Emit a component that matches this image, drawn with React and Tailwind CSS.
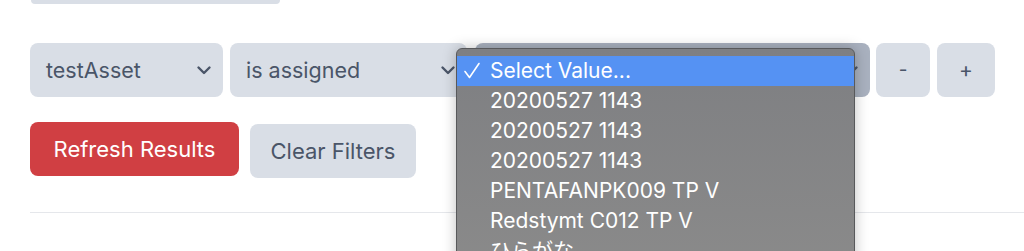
import React from 'react';

const font = { fontFamily: 'Inter, "Noto Sans", "Noto Sans CJK JP", sans-serif' };

function Chevron() {
    return (
        <svg width="16" height="16" viewBox="0 0 16 16" fill="none" stroke="#4a5568" strokeWidth="2.4" strokeLinecap="round" strokeLinejoin="round">
            <path d="M2.5 5.5l5.5 5.5 5.5-5.5" />
        </svg>
    );
}

function SelectBox({ label, width, dark }) {
    return (
        <div className={`h-[54px] ${width} ${dark ? 'bg-[#a9b1bf]' : 'bg-[#d9dee6]'} rounded-lg flex items-center justify-between pl-4 pr-[11px] text-[21.5px] text-[#4a5568]`}>
            <span>{label}</span>
            <Chevron />
        </div>
    );
}

export default function App() {
    const options = ['20200527 1143', '20200527 1143', '20200527 1143', 'PENTAFANPK009 TP V', 'Redstymt C012 TP V', 'ひらがな'];

    return (
        <div className="relative w-[1024px] h-[251px] overflow-hidden bg-white" style={font}>
            <div className="ml-[31px] w-[249px] h-[4px] bg-[#d9dee6] rounded-b-lg" />

            <div className="pl-[30px] mt-[39px] flex items-center">
                <SelectBox label="testAsset" width="w-[193px]" />
                <div className="ml-[7px]"><SelectBox label="is assigned" width="w-[237px]" /></div>
                <div className="ml-[8px]"><SelectBox label="" width="w-[395px]" dark /></div>
                <button className="ml-[6px] w-[54px] h-[54px] rounded-lg bg-[#d9dee6] text-[#4a5568] text-[19px]">-</button>
                <button className="ml-[7px] w-[58px] h-[54px] rounded-lg bg-[#d9dee6] text-[#4a5568] text-[21px]">+</button>
            </div>

            <div className="pl-[30px] mt-[25px] flex items-start">
                <button className="w-[209px] h-[54px] rounded-lg bg-[#d03f43] text-white text-[22px]">Refresh Results</button>
                <button className="ml-[11px] mt-[2px] w-[166px] h-[54px] rounded-lg bg-[#d9dee6] text-[#4a5568] text-[22px]">Clear Filters</button>
            </div>

            <div className="ml-[30px] mt-[34px] h-px bg-[#e5e7eb]" />

            {/* native select popup */}
            <div className="absolute left-[456px] top-[48px] w-[399px] h-[220px] rounded-t-[6px] border border-[#58595b] bg-gradient-to-b from-[#7e7f82] to-[#8a8a8a] shadow-[0_0_14px_rgba(0,0,0,0.25)] pt-[7px] text-white text-[21px] leading-[30px]">
                <div className="h-[30px] bg-[#5592f3] flex items-center">
                    <span className="w-[33px] pl-[6px] flex items-center">
                        <svg width="18" height="18" viewBox="0 0 18 18" fill="none" stroke="white" strokeWidth="1.6" strokeLinecap="round" strokeLinejoin="round">
                            <path d="M2 9.5l4.5 6L16 1.5" />
                        </svg>
                    </span>
                    <span>Select Value...</span>
                </div>
                {options.map((o, i) => (
                    <div key={i} className="h-[30px] pl-[33px] flex items-center">{o}</div>
                ))}
            </div>
        </div>
    );
}
